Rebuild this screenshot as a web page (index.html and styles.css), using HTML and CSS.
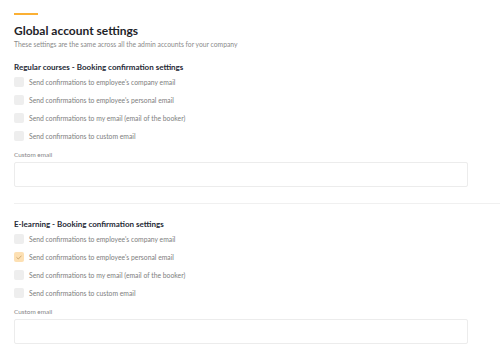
FILE: index.html
```html
<!DOCTYPE html>
<html>
<head>
<meta charset="utf-8">
<link rel="stylesheet" href="styles.css">
</head>
<body>
<div class="page">
  <div class="accent"></div>
  <h1 class="title">Global account settings</h1>
  <p class="subtitle">These settings are the same across all the admin accounts for your company</p>

  <section class="section">
    <h2 class="heading">Regular courses - Booking confirmation settings</h2>
    <div class="options">
      <label class="option"><span class="box"></span><span class="text">Send confirmations to employee's company email</span></label>
      <label class="option"><span class="box"></span><span class="text">Send confirmations to employee's personal email</span></label>
      <label class="option"><span class="box"></span><span class="text">Send confirmations to my email (email of the booker)</span></label>
      <label class="option"><span class="box"></span><span class="text">Send confirmations to custom email</span></label>
    </div>
    <div class="field-label">Custom email</div>
    <div class="input"></div>
  </section>

  <div class="divider"></div>

  <section class="section second">
    <h2 class="heading">E-learning - Booking confirmation settings</h2>
    <div class="options">
      <label class="option"><span class="box"></span><span class="text">Send confirmations to employee's company email</span></label>
      <label class="option"><span class="box checked"><svg width="6" height="5" viewBox="0 0 6 5"><path d="M0.8 2.6 L2.3 4 L5.2 1" fill="none" stroke="#c9a46a" stroke-width="0.9" stroke-linecap="round" stroke-linejoin="round"/></svg></span><span class="text">Send confirmations to employee's personal email</span></label>
      <label class="option"><span class="box"></span><span class="text">Send confirmations to my email (email of the booker)</span></label>
      <label class="option"><span class="box"></span><span class="text">Send confirmations to custom email</span></label>
    </div>
    <div class="field-label">Custom email</div>
    <div class="input"></div>
  </section>
</div>
</body>
</html>
```
FILE: styles.css
```css
html, body {
  margin: 0;
  padding: 0;
  background: #ffffff;
}
body {
  font-family: Lato, "Open Sans", sans-serif;
  width: 500px;
  height: 353px;
  overflow: hidden;
}
.page {
  padding: 13px 0 0 14px;
}
.accent {
  width: 24px;
  height: 2px;
  background: #fbb034;
}
.title {
  margin: 9px 0 0 0;
  font-size: 12px;
  line-height: 14px;
  font-weight: 700;
  color: #1e2328;
}
.subtitle {
  margin: 2px 0 0 0;
  font-size: 6.75px;
  line-height: 8px;
  color: #8a8a8a;
}
.section {
  margin-top: 15px;
  width: 454px;
}
.heading {
  margin: 0;
  font-size: 8px;
  line-height: 9px;
  font-weight: 700;
  color: #1f2a36;
}
.options {
  display: flex;
  flex-direction: column;
  gap: 8px;
  margin-top: 5px;
}
.option {
  display: flex;
  align-items: center;
  height: 10px;
}
.box {
  width: 10px;
  height: 10px;
  border-radius: 2px;
  background: #eeeeee;
  flex: none;
  display: flex;
  align-items: center;
  justify-content: center;
}
.box.checked {
  background: #fde0b3;
}
.text {
  margin-left: 5px;
  font-size: 6.8px;
  line-height: 10px;
  color: #7e7e7e;
}
.field-label {
  margin-top: 10px;
  font-size: 6.4px;
  line-height: 8px;
  color: #858585;
}
.input {
  margin-top: 3px;
  height: 23px;
  border: 1px solid #ececec;
  border-radius: 2px;
}
.divider {
  margin-top: 16px;
  height: 1px;
  background: #f0f0f0;
}
.section.second {
  margin-top: 16px;
}
```
